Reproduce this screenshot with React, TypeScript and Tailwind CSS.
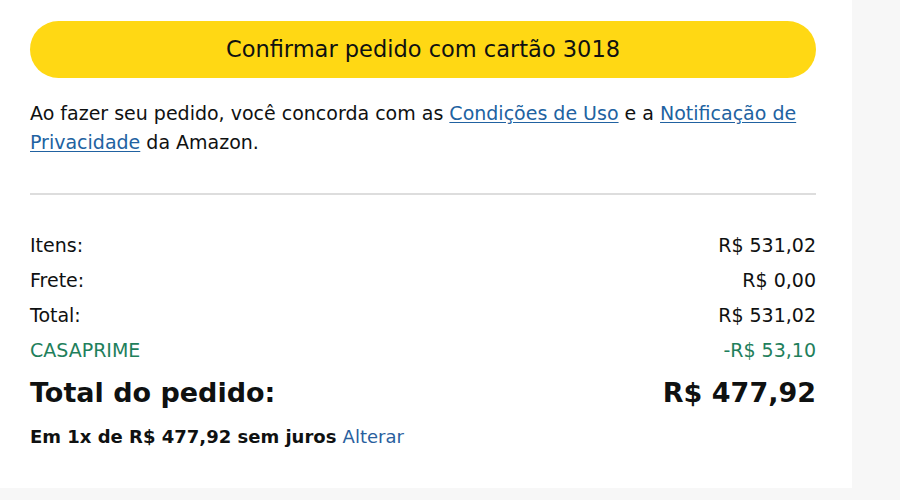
import React from 'react';

const rows = [
  { label: 'Itens:', value: 'R$ 531,02' },
  { label: 'Frete:', value: 'R$ 0,00' },
  { label: 'Total:', value: 'R$ 531,02' },
];

export default function App() {
  return (
    <div className="min-h-[500px] bg-[#f7f7f7] font-['DejaVu_Sans',sans-serif] text-[#0f1111]">
      <div className="w-[852px] h-[488px] bg-white px-[30px] pt-[21px]">
        <div className="w-[786px]">
          {/* Place order */}
          <button className="w-full h-[57px] rounded-full bg-[#ffd814] text-[22.5px] text-[#0f1111]">
            Confirmar pedido com cartão 3018
          </button>

          <p className="mt-[21px] text-[19px] leading-[29px]">
            Ao fazer seu pedido, você concorda com as{' '}
            <a className="text-[#2162a1] underline underline-offset-2">Condições de Uso</a> e a{' '}
            <a className="text-[#2162a1] underline underline-offset-2">Notificação de Privacidade</a> da Amazon.
          </p>

          <div className="mt-[36px] h-[2px] bg-[#dddddd]" />

          {/* Summary */}
          <div className="mt-[33px] text-[19px]">
            {rows.map((r) => (
              <div key={r.label} className="flex justify-between h-[35px] items-center">
                <span>{r.label}</span>
                <span>{r.value}</span>
              </div>
            ))}
            <div className="flex justify-between h-[35px] items-center text-[#1f805c]">
              <span>CASAPRIME</span>
              <span>-R$ 53,10</span>
            </div>
          </div>

          <div className="flex justify-between items-center h-[34px] mt-[8px] text-[27px] font-bold">
            <span>Total do pedido:</span>
            <span>R$ 477,92</span>
          </div>

          <p className="mt-[15px] text-[18px] leading-[24px] font-bold">
            Em 1x de R$ 477,92 sem juros <a className="font-normal text-[#2a5f9e]">Alterar</a>
          </p>
        </div>
      </div>
    </div>
  );
}
